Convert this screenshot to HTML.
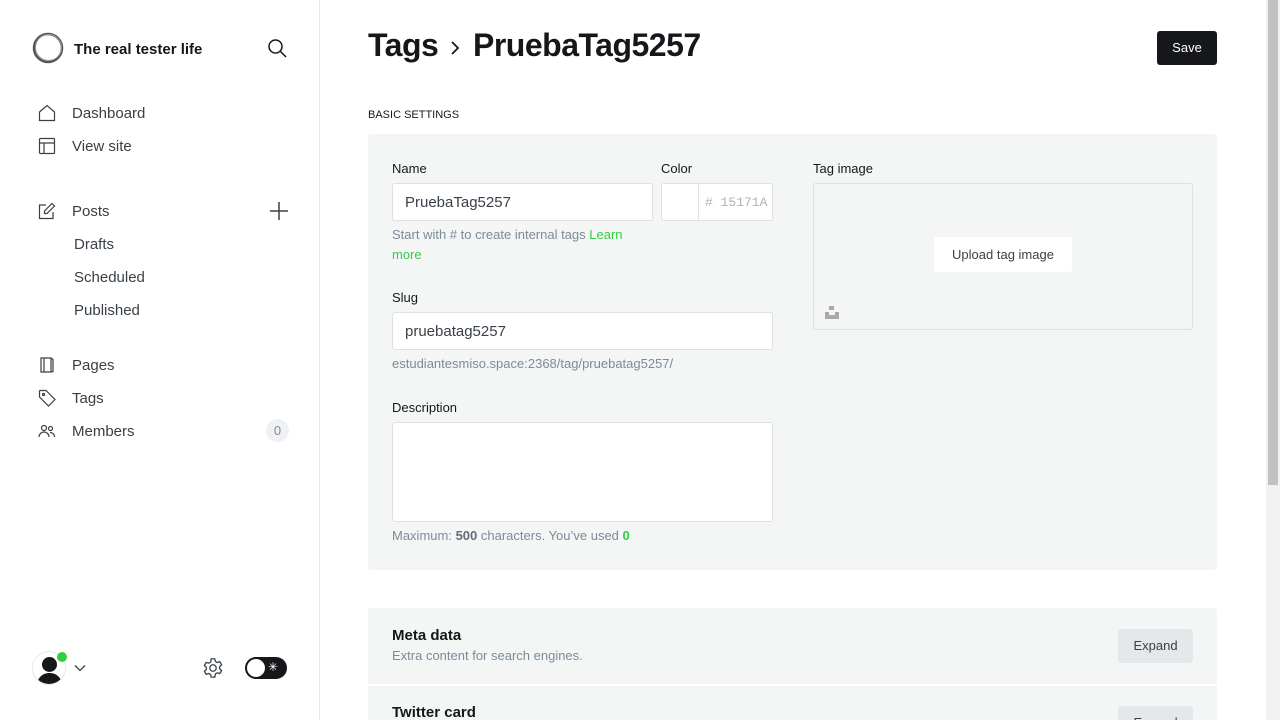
<!DOCTYPE html>
<html><head><meta charset="utf-8"><style>
*{box-sizing:border-box;margin:0;padding:0}
html{width:1280px;height:720px;overflow:hidden}
body{width:1280px;height:720px;overflow:hidden;font-family:"Liberation Sans",sans-serif;background:#fff;color:#15171a;position:relative}
.side{position:absolute;left:0;top:0;width:320px;height:720px;border-right:1px solid #e6e8eb}
.abs{position:absolute}
.nav{position:absolute;left:72px;font-size:15px;color:#394047;margin-top:1px}
.sub{left:74px}
.ic{position:absolute;left:38px}
.main{position:absolute;left:368px;top:0;width:849px;height:720px;overflow:hidden}
label{position:absolute;font-size:13px;color:#15171a}
.inp{position:absolute;background:#fff;border:1px solid #dde1e5;border-radius:3px;font-size:15px;color:#394047;padding-left:12px;display:flex;align-items:center}
.hint{position:absolute;font-size:13px;color:#7c8b9a;line-height:20px}
.sb{position:absolute;left:1266px;top:0;width:14px;height:720px;background:#f1f1f1}
.sb div{position:absolute;left:2px;top:0;width:10px;height:485px;background:#c1c1c1}
</style></head><body>
<div class="side">
  <svg class="abs" style="left:32px;top:32px" width="32" height="32" viewBox="0 0 32 32"><circle cx="16" cy="16" r="14" fill="none" stroke="#555" stroke-width="2.5"/><circle cx="16.5" cy="15.5" r="13" fill="none" stroke="#999" stroke-width="1"/></svg>
  <div class="abs" style="left:74px;top:41px;font-size:15px;font-weight:bold">The real tester life</div>
  <svg class="abs" style="left:267px;top:38px" width="20" height="20" viewBox="0 0 20 20" fill="none" stroke="#15171a" stroke-width="1.5"><circle cx="8.5" cy="8.5" r="6.5"/><path d="M13.5 13.5L19 19"/></svg>
  <svg class="ic" style="top:104px" width="18" height="18" viewBox="0 0 18 18" fill="none" stroke="#394047" stroke-width="1.2"><path d="M1.5 8L9 1.5 16.5 8v8.5h-15z"/></svg>
  <div class="nav" style="top:104px">Dashboard</div>
  <svg class="ic" style="top:137px" width="18" height="18" viewBox="0 0 18 18" fill="none" stroke="#394047" stroke-width="1.2"><rect x="1.5" y="1.5" width="15" height="15" rx="1"/><path d="M1.5 6h15M6 6v10.5"/></svg>
  <div class="nav" style="top:137px">View site</div>
  <svg class="ic" style="top:202px" width="18" height="18" viewBox="0 0 18 18" fill="none" stroke="#394047" stroke-width="1.2"><path d="M8 3H1.5v13.5H15V10M14 1.5l2.5 2.5L9 11.5H6.5V9z"/></svg>
  <div class="nav" style="top:202px">Posts</div>
  <svg class="abs" style="left:269px;top:201px" width="20" height="20" viewBox="0 0 20 20" stroke="#394047" stroke-width="1.5"><path d="M10 1v18M1 10h18"/></svg>
  <div class="nav sub" style="top:235px">Drafts</div>
  <div class="nav sub" style="top:268px">Scheduled</div>
  <div class="nav sub" style="top:301px">Published</div>
  <svg class="ic" style="top:356px" width="18" height="18" viewBox="0 0 18 18" fill="none" stroke="#394047" stroke-width="1.2"><path d="M3 2h10v14H3zM13 2l2 1.5V15.5L13 16M6 2v14"/></svg>
  <div class="nav" style="top:356px">Pages</div>
  <svg class="ic" style="top:389px" width="18" height="18" viewBox="0 0 18 18" fill="none" stroke="#394047" stroke-width="1.2"><path d="M1.5 2v6l9 9 6.5-6.5-9-9H2z"/><circle cx="5.5" cy="5.5" r="1"/></svg>
  <div class="nav" style="top:389px">Tags</div>
  <svg class="ic" style="top:423px" width="18" height="16" viewBox="0 0 18 16" fill="none" stroke="#394047" stroke-width="1.2"><circle cx="6" cy="5" r="2.5"/><path d="M1 14c0-3 2.5-5 5-5s5 2 5 5"/><circle cx="12.5" cy="5.5" r="2"/><path d="M12 9.5c2.5 0 4.5 1.8 4.5 4.5"/></svg>
  <div class="nav" style="top:422px">Members</div>
  <div class="abs" style="left:266px;top:419px;width:23px;height:23px;border-radius:50%;background:#eff1f3;font-size:13px;color:#7c8b9a;text-align:center;line-height:23px">0</div>
  <div class="abs" style="left:32px;top:651px;width:34px;height:34px;border-radius:50%;border:1px solid #e6e8eb;overflow:hidden;background:#fff">
    <div class="abs" style="left:9px;top:5px;width:15px;height:15px;border-radius:50%;background:#15171a"></div>
    <div class="abs" style="left:4px;top:21px;width:25px;height:16px;border-radius:12px 12px 0 0;background:#15171a"></div>
  </div>
  <div class="abs" style="left:57px;top:652px;width:10px;height:10px;border-radius:50%;background:#30cf43"></div>
  <svg class="abs" style="left:74px;top:664px" width="12" height="8" viewBox="0 0 12 8" fill="none" stroke="#394047" stroke-width="1.3"><path d="M1 1.5l5 5 5-5"/></svg>
  <svg class="abs" style="left:202px;top:657px" width="22" height="22" viewBox="0 0 24 24" fill="none" stroke="#394047" stroke-width="1.4"><circle cx="12" cy="12" r="3.5"/><path d="M10 2h4l.6 2.8 2.1 1.2 2.7-.9 2 3.4-2.1 1.9v2.4l2.1 1.9-2 3.4-2.7-.9-2.1 1.2L14 22h-4l-.6-2.8-2.1-1.2-2.7.9-2-3.4 2.1-1.9v-2.4L2.6 9.3l2-3.4 2.7.9 2.1-1.2z"/></svg>
  <div class="abs" style="left:245px;top:657px;width:42px;height:22px;border-radius:11px;background:#15171a"></div>
  <div class="abs" style="left:247px;top:659px;width:18px;height:18px;border-radius:50%;background:#fff"></div>
  <div class="abs" style="left:268px;top:660px;font-size:12px;color:#fff">✳</div>
</div>
<div class="main">
  <div class="abs" style="left:0;top:27px;font-size:32px;font-weight:bold;letter-spacing:-0.5px">Tags</div>
  <svg class="abs" style="left:82px;top:40px" width="10" height="16" viewBox="0 0 10 16" fill="none" stroke="#15171a" stroke-width="1.8"><path d="M2 2l6 6-6 6"/></svg>
  <div class="abs" style="left:105px;top:27px;font-size:32px;font-weight:bold;letter-spacing:-0.5px">PruebaTag5257</div>
  <div class="abs" style="left:789px;top:31px;width:60px;height:34px;background:#15171a;border-radius:3px;color:#fff;font-size:13px;text-align:center;line-height:34px">Save</div>
  <div class="abs" style="left:0;top:109px;font-size:11px;color:#15171a">BASIC SETTINGS</div>
  <div class="abs" style="left:0;top:134px;width:849px;height:436px;background:#f4f5f5;border-radius:3px">
    <label style="left:24px;top:27px">Name</label>
    <div class="inp" style="left:24px;top:49px;width:261px;height:38px">PruebaTag5257</div>
    <label style="left:293px;top:27px">Color</label>
    <div class="inp" style="left:293px;top:49px;width:112px;height:38px;padding:0">
      <div style="width:37px;height:36px;border-right:1px solid #dde1e5"></div>
      <div style="padding-left:6px;font-family:'Liberation Mono',monospace;font-size:13px;color:#abb4be">#&nbsp;15171A</div>
    </div>
    <div class="hint" style="left:24px;top:91px;width:250px">Start with # to create internal tags <span style="color:#30cf43">Learn more</span></div>
    <label style="left:24px;top:156px">Slug</label>
    <div class="inp" style="left:24px;top:178px;width:381px;height:38px">pruebatag5257</div>
    <div class="hint" style="left:24px;top:220px">estudiantesmiso.space:2368/tag/pruebatag5257/</div>
    <label style="left:24px;top:266px">Description</label>
    <div class="inp" style="left:24px;top:288px;width:381px;height:100px"></div>
    <div class="hint" style="left:24px;top:392px">Maximum: <b style="color:#626d79">500</b> characters. You’ve used <b style="color:#30cf43">0</b></div>
    <label style="left:445px;top:27px">Tag image</label>
    <div class="abs" style="left:445px;top:49px;width:380px;height:147px;border:1px solid #dde1e5;border-radius:3px;background:#f4f5f5">
      <div class="abs" style="left:120px;top:53px;width:138px;height:35px;background:#fff;border-radius:3px;font-size:13px;color:#394047;text-align:center;line-height:35px">Upload tag image</div>
      <svg class="abs" style="left:11px;top:121px" width="14" height="14" viewBox="0 0 14 14" fill="#aaa"><rect x="4" y="1" width="5" height="4"/><path d="M0 7h4v3h6V7h4v7H0z"/></svg>
    </div>
  </div>
  <div class="abs" style="left:0;top:608px;width:849px;height:76px;background:#f4f5f5;border-radius:3px 3px 0 0">
    <div class="abs" style="left:24px;top:19px;font-size:15px;font-weight:bold">Meta data</div>
    <div class="abs" style="left:24px;top:40px;font-size:13px;color:#7c8b9a">Extra content for search engines.</div>
    <div class="abs" style="left:750px;top:21px;width:75px;height:34px;background:#e5e8eb;border-radius:3px;font-size:13px;color:#394047;text-align:center;line-height:34px">Expand</div>
  </div>
  <div class="abs" style="left:0;top:686px;width:849px;height:34px;background:#f4f5f5;overflow:hidden">
    <div class="abs" style="left:24px;top:18px;font-size:15px;font-weight:bold">Twitter card</div>
    <div class="abs" style="left:750px;top:20px;width:75px;height:34px;background:#e5e8eb;border-radius:3px;font-size:13px;color:#394047;text-align:center;line-height:34px">Expand</div>
  </div>
</div>
<div class="sb"><div></div></div>
</body></html>
